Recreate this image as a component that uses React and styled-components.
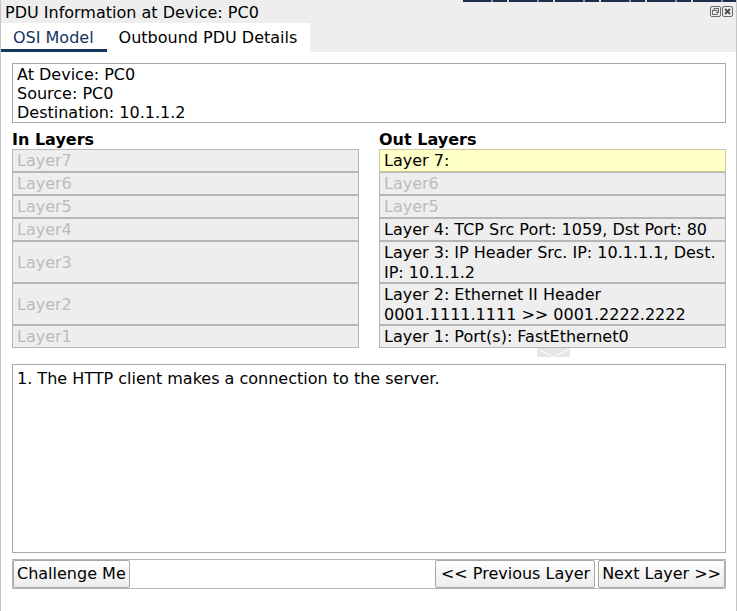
import styled, { createGlobalStyle } from 'styled-components';

const GlobalStyle = createGlobalStyle`
  html, body {
    margin: 0;
    padding: 0;
    background: #fff;
  }
  * {
    box-sizing: border-box;
  }
`;

const Window = styled.div`
  position: relative;
  display: flex;
  flex-direction: column;
  width: 737px;
  height: 611px;
  background: #fff;
  border-left: 1px solid #c4c4c4;
  border-right: 1px solid #c4c4c4;
  font-family: 'DejaVu Sans', 'Liberation Sans', sans-serif;
  font-size: 16px;
  color: #000;
`;

const BackdropStrip = styled.div`
  position: absolute;
  top: 0;
  left: 462px;
  right: 0;
  height: 2px;
  background: repeating-linear-gradient(
    90deg,
    #1d2d4a 0 28px,
    #8a93a3 28px 30px,
    #1d2d4a 30px 44px,
    #d8d8d8 44px 46px
  );
`;

const TitleBar = styled.div`
  display: flex;
  align-items: center;
  justify-content: space-between;
  height: 23px;
  padding: 2px 3px 0 4px;
  background: #eeeeee;
  line-height: 19px;
`;

const WindowButtons = styled.div`
  display: flex;
  gap: 1px;
  margin-top: -2px;
`;

const TabBar = styled.div`
  display: flex;
  height: 29px;
  background: #eeeeee;
`;

const Tab = styled.div`
  display: flex;
  align-items: center;
  height: 29px;
  padding: 3px 13px 0 12px;
  background: #fff;
  color: ${(p) => (p.$active ? '#14345c' : '#000')};
  border-bottom: 3px solid ${(p) => (p.$active ? '#14345c' : '#fff')};
`;

const Content = styled.div`
  display: flex;
  flex-direction: column;
  padding: 11px 10px 0 11px;
`;

const InfoBox = styled.div`
  height: 60px;
  padding: 1px 4px 0;
  border: 1px solid #a9a9a9;
  line-height: 19px;
`;

const Columns = styled.div`
  display: grid;
  grid-template-columns: 347px 347px;
  column-gap: 20px;
  margin-top: 7px;
`;

const Column = styled.div`
  display: flex;
  flex-direction: column;
`;

const Heading = styled.div`
  font-weight: bold;
  line-height: 19px;
`;

const LayerRow = styled.div`
  display: flex;
  align-items: center;
  height: ${(p) => (p.$tall ? 42 : 23)}px;
  padding: ${(p) => (p.$tall ? '1px 4px 0' : '0 4px')};
  line-height: ${(p) => (p.$tall ? 20 : 21)}px;
  border: 1px solid ${(p) => (p.$current ? '#c8c8a2' : '#b6b6b6')};
  background: ${(p) => (p.$current ? '#ffffc8' : '#eeeeee')};
  color: ${(p) => (p.$dim ? '#bcbcbc' : '#000')};
`;

const ArrowRow = styled.div`
  display: flex;
  justify-content: flex-end;
  height: 16px;
  padding-right: 156px;
`;

const DescBox = styled.div`
  height: 189px;
  padding: 4px 4px;
  border: 1px solid #a9a9a9;
  line-height: 19px;
`;

const ButtonBar = styled.div`
  display: flex;
  align-items: center;
  justify-content: space-between;
  height: 30px;
  margin-top: 6px;
  border: 1px solid #b6b6b6;
`;

const ButtonGroup = styled.div`
  display: flex;
  gap: 3px;
`;

const Button = styled.button`
  height: 28px;
  padding: 0 ${(p) => (p.$wide ? 4 : 3)}px 1px ${(p) => (p.$wide ? 5 : 3)}px;
  border: 1px solid #a8a8a8;
  border-radius: 2px;
  background: linear-gradient(#ffffff, #ececec);
  font-family: 'DejaVu Sans', 'Liberation Sans', sans-serif;
  font-size: 16px;
  color: #000;
  white-space: nowrap;
`;

const inLayers = [
  { label: 'Layer7' },
  { label: 'Layer6' },
  { label: 'Layer5' },
  { label: 'Layer4' },
  { label: 'Layer3', tall: true },
  { label: 'Layer2', tall: true },
  { label: 'Layer1' },
];

const outLayers = [
  { label: 'Layer 7:', current: true },
  { label: 'Layer6', dim: true },
  { label: 'Layer5', dim: true },
  { label: 'Layer 4: TCP Src Port: 1059, Dst Port: 80' },
  { label: 'Layer 3: IP Header Src. IP: 10.1.1.1, Dest. IP: 10.1.1.2', tall: true },
  { label: 'Layer 2: Ethernet II Header 0001.1111.1111 >> 0001.2222.2222', tall: true },
  { label: 'Layer 1: Port(s): FastEthernet0' },
];

function RestoreIcon() {
  return (
    <svg width="11" height="11" viewBox="0 0 11 11">
      <rect x="0.5" y="0.5" width="10" height="10" rx="1.5" fill="none" stroke="#6b6b6b" />
      <rect x="4" y="2.5" width="4.5" height="4" fill="none" stroke="#6b6b6b" />
      <rect x="2.5" y="4.5" width="4.5" height="4" fill="#eee" stroke="#6b6b6b" />
    </svg>
  );
}

function CloseIcon() {
  return (
    <svg width="11" height="11" viewBox="0 0 11 11">
      <rect x="0.5" y="0.5" width="10" height="10" rx="1.5" fill="none" stroke="#6b6b6b" />
      <path d="M3 3 L8 8 M8 3 L3 8" stroke="#4a4a4a" strokeWidth="1.8" />
    </svg>
  );
}

function DownArrow() {
  return (
    <svg width="33" height="10" viewBox="0 0 33 10">
      <polygon points="0,0 33,0 33,9 0,9" fill="#e6e6e6" />
      <polyline points="1,1 16.5,9 32,1" fill="none" stroke="#fafafa" strokeWidth="1.2" />
    </svg>
  );
}

export default function App() {
  return (
    <>
      <GlobalStyle />
      <Window>
        <BackdropStrip />
        <TitleBar>
          <span>PDU Information at Device: PC0</span>
          <WindowButtons>
            <RestoreIcon />
            <CloseIcon />
          </WindowButtons>
        </TitleBar>
        <TabBar>
          <Tab $active>OSI Model</Tab>
          <Tab>Outbound PDU Details</Tab>
        </TabBar>
        <Content>
          <InfoBox>
            At Device: PC0
            <br />
            Source: PC0
            <br />
            Destination: 10.1.1.2
          </InfoBox>
          <Columns>
            <Column>
              <Heading>In Layers</Heading>
              {inLayers.map((l) => (
                <LayerRow key={l.label} $tall={l.tall} $dim>
                  {l.label}
                </LayerRow>
              ))}
            </Column>
            <Column>
              <Heading>Out Layers</Heading>
              {outLayers.map((l) => (
                <LayerRow key={l.label} $tall={l.tall} $dim={l.dim} $current={l.current}>
                  {l.label}
                </LayerRow>
              ))}
            </Column>
          </Columns>
          <ArrowRow>
            <DownArrow />
          </ArrowRow>
          <DescBox>1. The HTTP client makes a connection to the server.</DescBox>
          <ButtonBar>
            <Button>Challenge Me</Button>
            <ButtonGroup>
              <Button $wide>&lt;&lt; Previous Layer</Button>
              <Button>Next Layer &gt;&gt;</Button>
            </ButtonGroup>
          </ButtonBar>
        </Content>
      </Window>
    </>
  );
}
